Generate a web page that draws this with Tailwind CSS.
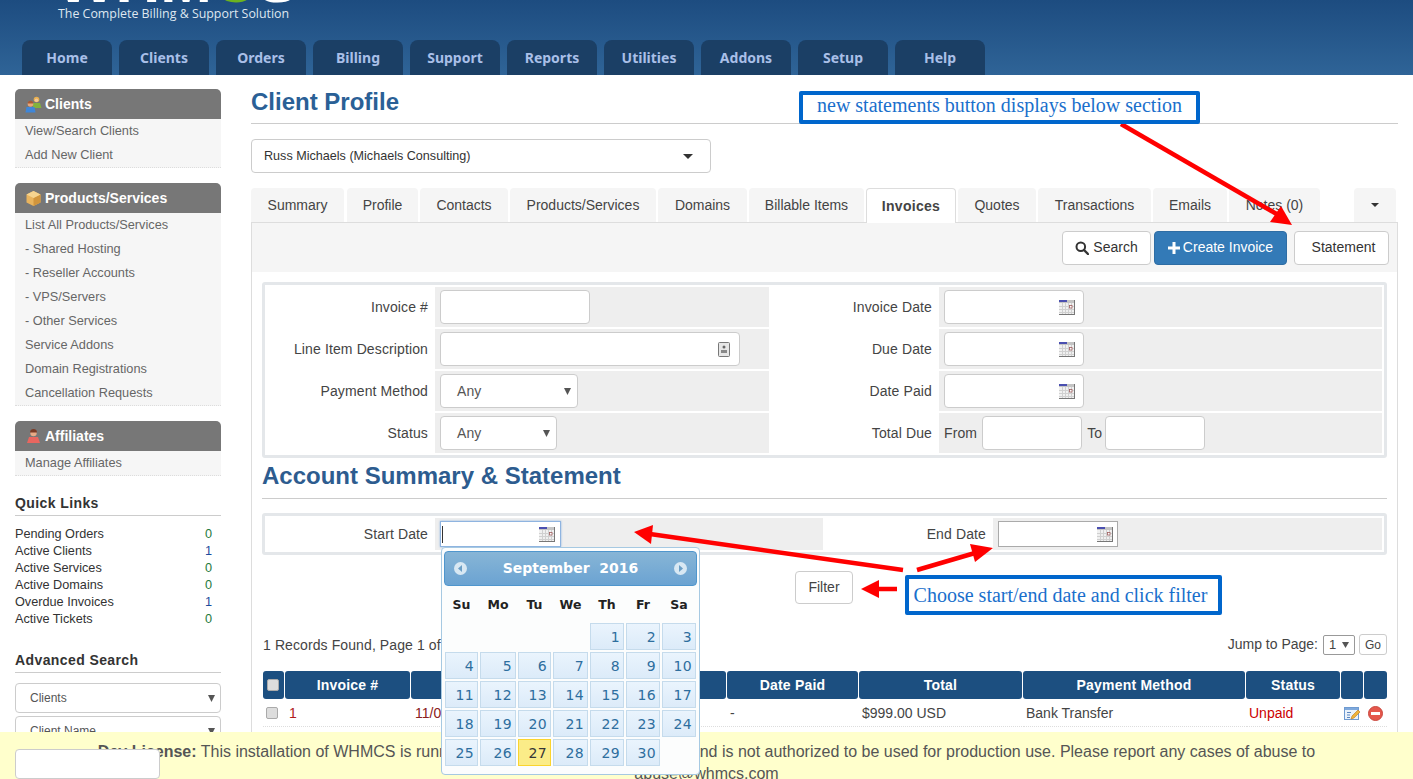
<!DOCTYPE html>
<html lang="en">
<head>
<meta charset="utf-8">
<title>WHMCS Client Profile</title>
<script src="https://cdn.jsdelivr.net/npm/@tailwindcss/browser@4"></script>
</head>
<body class="bg-white">
<div class="relative h-[779px] w-[1413px] overflow-hidden bg-white font-['Liberation_Sans',Arial,sans-serif] text-[14px] text-[#333]">

<!-- HEADER -->
<header class="relative h-[75px] overflow-hidden bg-gradient-to-b from-[#1d4c80] to-[#2f6497]">
  <div class="absolute left-[57px] top-[-49px] flex font-['Liberation_Sans',sans-serif] text-[62px] font-bold leading-[60px] text-white"><span>WHM</span><span class="text-[#6cb21f]">C</span><span>S</span></div>
  <div class="absolute left-[58px] top-[5px] font-['Open_Sans',sans-serif] text-[12.4px] leading-[18px] text-[#dfe7f0]">The Complete Billing &amp; Support Solution</div>
  <nav class="absolute bottom-0 left-[22px] flex gap-[7px] font-['Noto_Sans',sans-serif] text-[14px] font-bold text-[#a9bfe8]">
    <a class="flex h-[35px] w-[90px] items-center justify-center rounded-t-[8px] bg-[#1b3f65]">Home</a>
    <a class="flex h-[35px] w-[90px] items-center justify-center rounded-t-[8px] bg-[#1b3f65]">Clients</a>
    <a class="flex h-[35px] w-[90px] items-center justify-center rounded-t-[8px] bg-[#1b3f65]">Orders</a>
    <a class="flex h-[35px] w-[90px] items-center justify-center rounded-t-[8px] bg-[#1b3f65]">Billing</a>
    <a class="flex h-[35px] w-[90px] items-center justify-center rounded-t-[8px] bg-[#1b3f65]">Support</a>
    <a class="flex h-[35px] w-[90px] items-center justify-center rounded-t-[8px] bg-[#1b3f65]">Reports</a>
    <a class="flex h-[35px] w-[90px] items-center justify-center rounded-t-[8px] bg-[#1b3f65]">Utilities</a>
    <a class="flex h-[35px] w-[90px] items-center justify-center rounded-t-[8px] bg-[#1b3f65]">Addons</a>
    <a class="flex h-[35px] w-[90px] items-center justify-center rounded-t-[8px] bg-[#1b3f65]">Setup</a>
    <a class="flex h-[35px] w-[90px] items-center justify-center rounded-t-[8px] bg-[#1b3f65]">Help</a>
  </nav>
</header>

<div class="flex">
  <!-- SIDEBAR -->
  <aside class="ml-[15px] mt-[14px] w-[206px] shrink-0">
    <div class="flex h-[30px] items-center gap-[3px] rounded-t-[5px] bg-[#777] pl-[10px] text-[14px] font-bold text-white">
      <svg width="17" height="17" viewBox="0 0 17 17"><circle cx="11.500" cy="3.500" r="2.800" fill="#e9b04f"/><circle cx="11.500" cy="4.200" r="1.800" fill="#f2c79a"/><path d="M8 7h7l1.500 5H8z" fill="#83b23c"/><circle cx="5.500" cy="8" r="2.800" fill="#e7a77a"/><path d="M2.700 7.500a2.800 2.800 0 015.600 0z" fill="#a85a34"/><path d="M.5 16.500l1-5.500h8l1 5.500z" fill="#3f86d8"/></svg>
      <span>Clients</span>
    </div>
    <div class="flex flex-col border-b border-dotted border-[#ddd] bg-[#f6f6f6] pl-[10px] text-[12.75px] text-[#666]">
      <a class="flex h-[24px] items-center">View/Search Clients</a>
      <a class="flex h-[24px] items-center">Add New Client</a>
    </div>
    <div class="mt-[15px] flex h-[30px] items-center gap-[3px] rounded-t-[5px] bg-[#777] pl-[10px] text-[14px] font-bold text-white">
      <svg width="17" height="17" viewBox="0 0 17 17"><path d="M8.500 1l7 3.500v8l-7 3.500-7-3.500v-8z" fill="#e9b45e"/><path d="M8.500 8l7-3.500v8l-7 3.500z" fill="#d1953d"/><path d="M8.500 1l7 3.500-7 3.500-7-3.500z" fill="#f6d48f"/></svg>
      <span>Products/Services</span>
    </div>
    <div class="flex flex-col border-b border-dotted border-[#ddd] bg-[#f6f6f6] pl-[10px] text-[12.75px] text-[#666]">
      <a class="flex h-[24px] items-center">List All Products/Services</a>
      <a class="flex h-[24px] items-center">- Shared Hosting</a>
      <a class="flex h-[24px] items-center">- Reseller Accounts</a>
      <a class="flex h-[24px] items-center">- VPS/Servers</a>
      <a class="flex h-[24px] items-center">- Other Services</a>
      <a class="flex h-[24px] items-center">Service Addons</a>
      <a class="flex h-[24px] items-center">Domain Registrations</a>
      <a class="flex h-[24px] items-center">Cancellation Requests</a>
    </div>
    <div class="mt-[15px] flex h-[30px] items-center gap-[3px] rounded-t-[5px] bg-[#777] pl-[10px] text-[14px] font-bold text-white">
      <svg width="17" height="17" viewBox="0 0 17 17"><circle cx="8.500" cy="5" r="3.200" fill="#e9ab86"/><path d="M5 4.500a3.500 3.500 0 017 0H5z" fill="#7a3b26"/><path d="M2 15l2-6h9l2 6z" fill="#e8665f"/></svg>
      <span>Affiliates</span>
    </div>
    <div class="flex flex-col border-b border-dotted border-[#ddd] bg-[#f6f6f6] pl-[10px] text-[12.75px] text-[#666]">
      <a class="flex h-[24px] items-center">Manage Affiliates</a>
    </div>

    <h3 class="mt-[18px] h-[21px] text-[14px] font-bold leading-[18px] tracking-[0.4px] text-[#333]">Quick Links</h3>
    <div class="border-t border-[#ccc] pt-[10px] text-[12.7px] leading-[17px] text-[#333]">
      <div class="flex justify-between pr-[9px]"><span>Pending Orders</span><span class="text-[#1f7a3d]">0</span></div>
      <div class="flex justify-between pr-[9px]"><span>Active Clients</span><span class="text-[#1d4c9c]">1</span></div>
      <div class="flex justify-between pr-[9px]"><span>Active Services</span><span class="text-[#1f7a3d]">0</span></div>
      <div class="flex justify-between pr-[9px]"><span>Active Domains</span><span class="text-[#1f7a3d]">0</span></div>
      <div class="flex justify-between pr-[9px]"><span>Overdue Invoices</span><span class="text-[#1d4c9c]">1</span></div>
      <div class="flex justify-between pr-[9px]"><span>Active Tickets</span><span class="text-[#1f7a3d]">0</span></div>
    </div>

    <h3 class="mt-[23px] h-[21px] text-[14px] font-bold leading-[18px] tracking-[0.4px] text-[#333]">Advanced Search</h3>
    <div class="border-t border-[#ccc] pt-[10px]">
      <div class="flex h-[30px] items-center justify-between rounded-[4px] border border-[#ccc] bg-white pl-[14px] pr-[5px] text-[12px] text-[#555]">
        <span>Clients</span>
        <svg width="7" height="7" viewBox="0 0 7 7"><path d="M0 0h7L3.500 7z" fill="#555"/></svg>
      </div>
      <div class="mt-[3px] flex h-[30px] items-center justify-between rounded-[4px] border border-[#ccc] bg-white pl-[14px] pr-[5px] text-[12px] text-[#555]">
        <span>Client Name</span>
        <svg width="7" height="7" viewBox="0 0 7 7"><path d="M0 0h7L3.500 7z" fill="#555"/></svg>
      </div>
      <input class="relative z-20 mt-[3px] block h-[30px] w-[145px] rounded-[4px] border border-[#ccc] bg-white">
    </div>
  </aside>

  <!-- MAIN -->
  <main class="ml-[30px] w-[1147px] shrink-0">
    <h1 class="mt-[14px] h-[35px] border-b border-[#ccc] text-[24px] font-bold leading-[26px] text-[#2a6096]">Client Profile</h1>
    <div class="mt-[15px] flex h-[34px] w-[460px] items-center justify-between rounded-[4px] border border-[#ccc] pl-[12px] pr-[17px] text-[12.6px] text-[#333]">
      <span>Russ Michaels (Michaels Consulting)</span>
      <svg width="10" height="5" viewBox="0 0 10 5"><path d="M0 0h10L5 5z" fill="#333"/></svg>
    </div>

    <!-- tabs -->
    <div class="mt-[15px] flex h-[34px] text-[14px] text-[#444]">
      <a class="flex w-[93px] items-center justify-center rounded-t-[4px] bg-[#f5f5f5]">Summary</a>
      <a class="ml-[3px] flex w-[71px] items-center justify-center rounded-t-[4px] bg-[#f5f5f5]">Profile</a>
      <a class="ml-[2px] flex w-[88px] items-center justify-center rounded-t-[4px] bg-[#f5f5f5]">Contacts</a>
      <a class="ml-[2px] flex w-[146px] items-center justify-center rounded-t-[4px] bg-[#f5f5f5]">Products/Services</a>
      <a class="ml-[2px] flex w-[89px] items-center justify-center rounded-t-[4px] bg-[#f5f5f5]">Domains</a>
      <a class="ml-[2px] flex w-[115px] items-center justify-center rounded-t-[4px] bg-[#f5f5f5]">Billable Items</a>
      <a class="relative z-10 ml-[2px] flex h-[35px] w-[90px] items-center justify-center rounded-t-[4px] border border-b-0 border-[#ddd] bg-white font-bold tracking-[0.3px]">Invoices</a>
      <a class="ml-[2px] flex w-[78px] items-center justify-center rounded-t-[4px] bg-[#f5f5f5]">Quotes</a>
      <a class="ml-[2px] flex w-[113px] items-center justify-center rounded-t-[4px] bg-[#f5f5f5]">Transactions</a>
      <a class="ml-[2px] flex w-[74px] items-center justify-center rounded-t-[4px] bg-[#f5f5f5]">Emails</a>
      <a class="ml-[2px] flex w-[91px] items-center justify-center rounded-t-[4px] bg-[#f5f5f5]">Notes (0)</a>
      <a class="ml-[34px] flex w-[42px] items-center justify-center rounded-t-[4px] bg-[#f5f5f5]">
        <svg width="8" height="4" viewBox="0 0 8 4"><path d="M0 0h8L4 4z" fill="#333"/></svg>
      </a>
    </div>

    <!-- pane -->
    <section class="h-[600px] border-x border-t border-[#ddd]">
      <div class="flex h-[49px] items-center justify-end bg-[#f5f5f5] pr-[8px]">
        <button class="flex h-[34px] w-[89px] items-center justify-center gap-[4px] rounded-[4px] border border-[#ccc] bg-white text-[#333]">
          <svg width="14" height="14" viewBox="0 0 14 14"><circle cx="5.800" cy="5.800" r="4.300" fill="none" stroke="#333" stroke-width="2"/><path d="M9 9l4 4" stroke="#333" stroke-width="2.400" stroke-linecap="round"/></svg>
          <span>Search</span>
        </button>
        <button class="ml-[3px] flex h-[34px] w-[133px] items-center justify-center gap-[3px] rounded-[4px] border border-[#2e6da4] bg-[#337ab7] text-white">
          <svg width="12" height="12" viewBox="0 0 12 12"><path d="M4.500 0h3v4.500H12v3H7.500V12h-3V7.500H0v-3h4.500z" fill="#fff"/></svg>
          <span>Create Invoice</span>
        </button>
        <button class="ml-[7px] h-[34px] w-[95px] rounded-[4px] border border-[#ccc] bg-white pl-[4px] text-[#333]">Statement</button>
      </div>

      <div class="px-[10px]">
        <!-- filter box -->
        <div class="mt-[10px] grid w-[1125px] grid-cols-[168px_334px_170px_443px] gap-y-[2px] rounded-[3px] border-[3px] border-[#e4e7ea] p-[2px] text-[14px] tracking-[0.12px] text-[#444]">
          <div class="flex h-[40px] items-center justify-end pr-[7px]">Invoice #</div>
          <div class="flex h-[40px] items-center bg-[#eee] pl-[5px]"><input class="h-[34px] w-[150px] rounded-[4px] border border-[#ccc] bg-white"></div>
          <div class="flex h-[40px] items-center justify-end pr-[7px]">Invoice Date</div>
          <div class="flex h-[40px] items-center bg-[#eee] pl-[5px]">
            <div class="flex h-[34px] w-[140px] items-center justify-end rounded-[4px] border border-[#ccc] bg-white pr-[8px]">
              <svg width="16" height="15" viewBox="0 0 16 15"><rect width="16" height="15" fill="#777"/><rect x="0" y="0" width="15" height="14" fill="#f0f0f0"/><rect x="0" y="0" width="15" height="3" fill="#c4c4c4"/><rect x="0" y="0" width="8" height="2" fill="#4a4fb0"/><path d="M0 6.500h15M0 9.500h15M0 12.500h15M3.500 3v11M6.500 3v11M9.500 3v11M12.500 3v11" stroke="#d0d0d0" stroke-width="1"/><rect x="10.500" y="5.500" width="2.500" height="2.500" fill="#fff" stroke="#a06060" stroke-width=".8"/></svg>
            </div>
          </div>

          <div class="flex h-[40px] items-center justify-end pr-[7px]">Line Item Description</div>
          <div class="flex h-[40px] items-center bg-[#eee] pl-[5px]">
            <div class="flex h-[34px] w-[300px] items-center justify-end rounded-[4px] border border-[#ccc] bg-white pr-[9px]">
              <svg width="12" height="15" viewBox="0 0 12 15"><rect x=".5" y=".5" width="11" height="14" rx="1" fill="#e6e6e6" stroke="#777"/><circle cx="6" cy="5" r="1.500" fill="#666"/><path d="M3 11h6V8H3z" fill="#888"/></svg>
            </div>
          </div>
          <div class="flex h-[40px] items-center justify-end pr-[7px]">Due Date</div>
          <div class="flex h-[40px] items-center bg-[#eee] pl-[5px]">
            <div class="flex h-[34px] w-[140px] items-center justify-end rounded-[4px] border border-[#ccc] bg-white pr-[8px]">
              <svg width="16" height="15" viewBox="0 0 16 15"><rect width="16" height="15" fill="#777"/><rect x="0" y="0" width="15" height="14" fill="#f0f0f0"/><rect x="0" y="0" width="15" height="3" fill="#c4c4c4"/><rect x="0" y="0" width="8" height="2" fill="#4a4fb0"/><path d="M0 6.500h15M0 9.500h15M0 12.500h15M3.500 3v11M6.500 3v11M9.500 3v11M12.500 3v11" stroke="#d0d0d0" stroke-width="1"/><rect x="10.500" y="5.500" width="2.500" height="2.500" fill="#fff" stroke="#a06060" stroke-width=".8"/></svg>
            </div>
          </div>

          <div class="flex h-[40px] items-center justify-end pr-[7px]">Payment Method</div>
          <div class="flex h-[40px] items-center bg-[#eee] pl-[5px]">
            <div class="flex h-[34px] w-[138px] items-center justify-between rounded-[4px] border border-[#ccc] bg-white pl-[16px] pr-[6px] text-[#555]">
              <span>Any</span>
              <svg width="7" height="7" viewBox="0 0 7 7"><path d="M0 0h7L3.500 7z" fill="#555"/></svg>
            </div>
          </div>
          <div class="flex h-[40px] items-center justify-end pr-[7px]">Date Paid</div>
          <div class="flex h-[40px] items-center bg-[#eee] pl-[5px]">
            <div class="flex h-[34px] w-[140px] items-center justify-end rounded-[4px] border border-[#ccc] bg-white pr-[8px]">
              <svg width="16" height="15" viewBox="0 0 16 15"><rect width="16" height="15" fill="#777"/><rect x="0" y="0" width="15" height="14" fill="#f0f0f0"/><rect x="0" y="0" width="15" height="3" fill="#c4c4c4"/><rect x="0" y="0" width="8" height="2" fill="#4a4fb0"/><path d="M0 6.500h15M0 9.500h15M0 12.500h15M3.500 3v11M6.500 3v11M9.500 3v11M12.500 3v11" stroke="#d0d0d0" stroke-width="1"/><rect x="10.500" y="5.500" width="2.500" height="2.500" fill="#fff" stroke="#a06060" stroke-width=".8"/></svg>
            </div>
          </div>

          <div class="flex h-[40px] items-center justify-end pr-[7px]">Status</div>
          <div class="flex h-[40px] items-center bg-[#eee] pl-[5px]">
            <div class="flex h-[34px] w-[117px] items-center justify-between rounded-[4px] border border-[#ccc] bg-white pl-[16px] pr-[6px] text-[#555]">
              <span>Any</span>
              <svg width="7" height="7" viewBox="0 0 7 7"><path d="M0 0h7L3.500 7z" fill="#555"/></svg>
            </div>
          </div>
          <div class="flex h-[40px] items-center justify-end pr-[7px]">Total Due</div>
          <div class="flex h-[40px] items-center bg-[#eee] pl-[5px]">
            <span>From</span>
            <input class="ml-[5px] h-[34px] w-[100px] rounded-[4px] border border-[#ccc] bg-white">
            <span class="ml-[5px]">To</span>
            <input class="ml-[3px] h-[34px] w-[100px] rounded-[4px] border border-[#ccc] bg-white">
          </div>
        </div>

        <!-- Statement -->
        <h2 class="h-[41px] border-b border-[#ccc] pt-[5px] text-[24px] font-bold leading-[26px] text-[#2d5c8f]">Account Summary &amp; Statement</h2>

        <div class="mt-[14px] grid w-[1125px] grid-cols-[168px_388px_170px_389px] rounded-[3px] border-[3px] border-[#e4e7ea] p-[2px] text-[14px] tracking-[0.12px] text-[#444]">
          <div class="flex h-[32px] items-center justify-end pr-[7px]">Start Date</div>
          <div class="flex h-[32px] items-center bg-[#eee] pl-[5px]">
            <div class="flex h-[26px] w-[121px] items-center justify-between border border-[#8fb4e0] bg-white pl-[1px] pr-[5px] shadow-[0_0_2px_#8fb4e0]">
              <span class="h-[17px] w-px bg-[#333]"></span>
              <svg width="16" height="15" viewBox="0 0 16 15"><rect width="16" height="15" fill="#777"/><rect x="0" y="0" width="15" height="14" fill="#f0f0f0"/><rect x="0" y="0" width="15" height="3" fill="#c4c4c4"/><rect x="0" y="0" width="8" height="2" fill="#4a4fb0"/><path d="M0 6.500h15M0 9.500h15M0 12.500h15M3.500 3v11M6.500 3v11M9.500 3v11M12.500 3v11" stroke="#d0d0d0" stroke-width="1"/><rect x="10.500" y="5.500" width="2.500" height="2.500" fill="#fff" stroke="#a06060" stroke-width=".8"/></svg>
            </div>
          </div>
          <div class="flex h-[32px] items-center justify-end pr-[7px]">End Date</div>
          <div class="flex h-[32px] items-center bg-[#eee] pl-[5px]">
            <div class="flex h-[26px] w-[120px] items-center justify-end border border-[#aaa] bg-white pr-[4px]">
              <svg width="16" height="15" viewBox="0 0 16 15"><rect width="16" height="15" fill="#777"/><rect x="0" y="0" width="15" height="14" fill="#f0f0f0"/><rect x="0" y="0" width="15" height="3" fill="#c4c4c4"/><rect x="0" y="0" width="8" height="2" fill="#4a4fb0"/><path d="M0 6.500h15M0 9.500h15M0 12.500h15M3.500 3v11M6.500 3v11M9.500 3v11M12.500 3v11" stroke="#d0d0d0" stroke-width="1"/><rect x="10.500" y="5.500" width="2.500" height="2.500" fill="#fff" stroke="#a06060" stroke-width=".8"/></svg>
            </div>
          </div>
        </div>

        <div class="mt-[16px] flex justify-center pr-[1px]">
          <button class="h-[33px] w-[58px] rounded-[4px] border border-[#ccc] bg-white text-[#444]">Filter</button>
        </div>

        <div class="mt-[30px] flex h-[21px] items-center justify-between text-[14px] text-[#444]">
          <span class="pl-px pt-[1px] tracking-[0.1px]">1 Records Found, Page 1 of 1</span>
          <div class="flex items-center">
            <span>Jump to Page:</span>
            <div class="ml-[5px] flex h-[20px] w-[32px] items-center justify-between rounded-[2px] border border-[#999] bg-white px-[5px] text-[13px]">
              <span>1</span>
              <svg width="7" height="6" viewBox="0 0 7 6"><path d="M0 0h7L3.500 6z" fill="#555"/></svg>
            </div>
            <button class="ml-[4px] h-[21px] w-[28px] rounded-[3px] border border-[#ccc] bg-white text-[12px]">Go</button>
          </div>
        </div>

        <!-- table -->
        <div class="mt-[16px] w-[1124px] pl-px">
          <div class="grid h-[28px] grid-cols-[21px_125px_157px_157px_131px_163px_222px_94px_22px_23px] gap-x-px text-[14px] font-bold tracking-[0.2px] text-white">
            <div class="flex items-center rounded-[3px] bg-[#1c4f80] pl-[4px]"><span class="h-[12px] w-[12px] rounded-[2px] border border-[#aaa] bg-[#ddd]"></span></div>
            <div class="flex items-center justify-center rounded-[3px] bg-[#1c4f80]">Invoice #</div>
            <div class="flex items-center justify-center rounded-[3px] bg-[#1c4f80]">Invoice Date</div>
            <div class="flex items-center justify-center rounded-[3px] bg-[#1c4f80]">Due Date</div>
            <div class="flex items-center justify-center rounded-[3px] bg-[#1c4f80]">Date Paid</div>
            <div class="flex items-center justify-center rounded-[3px] bg-[#1c4f80]">Total</div>
            <div class="flex items-center justify-center rounded-[3px] bg-[#1c4f80]">Payment Method</div>
            <div class="flex items-center justify-center rounded-[3px] bg-[#1c4f80]">Status</div>
            <div class="rounded-[3px] bg-[#1c4f80]"></div>
            <div class="rounded-[3px] bg-[#1c4f80]"></div>
          </div>
          <div class="grid h-[28px] grid-cols-[21px_125px_157px_157px_131px_163px_222px_94px_22px_23px] gap-x-px text-[14px] text-[#444]">
            <div class="flex items-center border-b border-dotted border-[#ddd] pl-[3px] pt-[1px]"><span class="h-[12px] w-[12px] rounded-[2px] border border-[#aaa] bg-[#ddd]"></span></div>
            <div class="flex items-center border-b border-dotted border-[#ddd] pl-[4px] pt-[1px] text-[#b01c1c]">1</div>
            <div class="flex items-center border-b border-dotted border-[#ddd] pl-[4px] pt-[1px] text-[#8a2020]">11/09/2016</div>
            <div class="flex items-center border-b border-dotted border-[#ddd] pl-[4px] pt-[1px]">11/09/2016</div>
            <div class="flex items-center border-b border-dotted border-[#ddd] pl-[3px] pt-[1px]">-</div>
            <div class="flex items-center border-b border-dotted border-[#ddd] pl-[3px] pt-[1px]">$999.00 USD</div>
            <div class="flex items-center border-b border-dotted border-[#ddd] pl-[3px] pt-[1px]">Bank Transfer</div>
            <div class="flex items-center border-b border-dotted border-[#ddd] pl-[3px] pt-[1px] text-[#cc0000]">Unpaid</div>
            <div class="flex items-center justify-center border-b border-dotted border-[#ddd] pt-[1px]">
              <svg width="16" height="15" viewBox="0 0 16 15"><rect x=".5" y="1.500" width="14" height="12" fill="#eaf2fb" stroke="#6f9bd1"/><rect x="1" y="2" width="13" height="2" fill="#7fa9dc"/><path d="M3 6.500h4M3 9h3M3 11.500h3" stroke="#5b86bf"/><path d="M7 13l1-3 6-6 2 2-6 6z" fill="#f0b33a" stroke="#b97a1c" stroke-width=".6"/></svg>
            </div>
            <div class="flex items-center justify-center border-b border-dotted border-[#ddd] pt-[1px]">
              <svg width="15" height="15" viewBox="0 0 15 15"><circle cx="7.500" cy="7.500" r="7" fill="#e5574c" stroke="#c9483e"/><rect x="3" y="6" width="9" height="3" fill="#fff"/></svg>
            </div>
          </div>
        </div>
      </div>
    </section>
  </main>
</div>

<!-- LICENSE BANNER -->
<div class="absolute bottom-0 left-0 z-10 h-[47px] w-full bg-[#ffc] pt-[9px] text-center text-[16px] leading-[22px] text-[#555]">
  <div class="mx-auto w-[1290px]"><strong>Dev License:</strong> This installation of WHMCS is running under a Development License and is not authorized to be used for production use. Please report any cases of abuse to abuse@whmcs.com</div>
</div>

<!-- DATEPICKER -->
<div class="absolute left-[441px] top-[547px] z-30 h-[228px] w-[259px] rounded-[4px] border border-[#a6c9e2] bg-[#fcfdfd] px-[2px] pt-[3px] font-['DejaVu_Sans',sans-serif]">
  <div class="flex h-[35px] items-center justify-between rounded-[4px] border border-[#4f96cd] bg-gradient-to-b from-[#87b5d6] to-[#6ba3d2] px-[8px] text-[14px] font-bold text-white">
    <svg width="15" height="15" viewBox="0 0 15 15"><circle cx="7.500" cy="7.500" r="6.500" fill="#d8e8f3"/><path d="M9 4v7L5 7.500z" fill="#6b9fc6"/></svg>
    <span class="whitespace-pre">September  2016</span>
    <svg width="15" height="15" viewBox="0 0 15 15"><circle cx="7.500" cy="7.500" r="6.500" fill="#d8e8f3"/><path d="M6 4v7l4-3.500z" fill="#6b9fc6"/></svg>
  </div>
  <div class="ml-px mt-[9px] grid h-[28px] grid-cols-[33px_36px_33px_35px_34px_34px_34px] gap-x-[2px] text-center text-[12.5px] font-bold leading-[20px] text-[#222]">
    <span>Su</span><span>Mo</span><span>Tu</span><span>We</span><span>Th</span><span>Fr</span><span>Sa</span>
  </div>
  <div class="ml-px grid grid-cols-[33px_36px_33px_35px_34px_34px_34px] gap-[2px] text-right text-[14px] leading-[27px] tracking-[0.4px] text-[#2e6e9e]">
    <span></span><span></span><span></span><span></span>
    <a class="h-[27px] border border-[#c5dbec] bg-gradient-to-b from-[#eaf4fd] to-[#dcebf9] pr-[3px]">1</a>
    <a class="h-[27px] border border-[#c5dbec] bg-gradient-to-b from-[#eaf4fd] to-[#dcebf9] pr-[3px]">2</a>
    <a class="h-[27px] border border-[#c5dbec] bg-gradient-to-b from-[#eaf4fd] to-[#dcebf9] pr-[3px]">3</a>
    <a class="h-[27px] border border-[#c5dbec] bg-gradient-to-b from-[#eaf4fd] to-[#dcebf9] pr-[3px]">4</a>
    <a class="h-[27px] border border-[#c5dbec] bg-gradient-to-b from-[#eaf4fd] to-[#dcebf9] pr-[3px]">5</a>
    <a class="h-[27px] border border-[#c5dbec] bg-gradient-to-b from-[#eaf4fd] to-[#dcebf9] pr-[3px]">6</a>
    <a class="h-[27px] border border-[#c5dbec] bg-gradient-to-b from-[#eaf4fd] to-[#dcebf9] pr-[3px]">7</a>
    <a class="h-[27px] border border-[#c5dbec] bg-gradient-to-b from-[#eaf4fd] to-[#dcebf9] pr-[3px]">8</a>
    <a class="h-[27px] border border-[#c5dbec] bg-gradient-to-b from-[#eaf4fd] to-[#dcebf9] pr-[3px]">9</a>
    <a class="h-[27px] border border-[#c5dbec] bg-gradient-to-b from-[#eaf4fd] to-[#dcebf9] pr-[3px]">10</a>
    <a class="h-[27px] border border-[#c5dbec] bg-gradient-to-b from-[#eaf4fd] to-[#dcebf9] pr-[3px]">11</a>
    <a class="h-[27px] border border-[#c5dbec] bg-gradient-to-b from-[#eaf4fd] to-[#dcebf9] pr-[3px]">12</a>
    <a class="h-[27px] border border-[#c5dbec] bg-gradient-to-b from-[#eaf4fd] to-[#dcebf9] pr-[3px]">13</a>
    <a class="h-[27px] border border-[#c5dbec] bg-gradient-to-b from-[#eaf4fd] to-[#dcebf9] pr-[3px]">14</a>
    <a class="h-[27px] border border-[#c5dbec] bg-gradient-to-b from-[#eaf4fd] to-[#dcebf9] pr-[3px]">15</a>
    <a class="h-[27px] border border-[#c5dbec] bg-gradient-to-b from-[#eaf4fd] to-[#dcebf9] pr-[3px]">16</a>
    <a class="h-[27px] border border-[#c5dbec] bg-gradient-to-b from-[#eaf4fd] to-[#dcebf9] pr-[3px]">17</a>
    <a class="h-[27px] border border-[#c5dbec] bg-gradient-to-b from-[#eaf4fd] to-[#dcebf9] pr-[3px]">18</a>
    <a class="h-[27px] border border-[#c5dbec] bg-gradient-to-b from-[#eaf4fd] to-[#dcebf9] pr-[3px]">19</a>
    <a class="h-[27px] border border-[#c5dbec] bg-gradient-to-b from-[#eaf4fd] to-[#dcebf9] pr-[3px]">20</a>
    <a class="h-[27px] border border-[#c5dbec] bg-gradient-to-b from-[#eaf4fd] to-[#dcebf9] pr-[3px]">21</a>
    <a class="h-[27px] border border-[#c5dbec] bg-gradient-to-b from-[#eaf4fd] to-[#dcebf9] pr-[3px]">22</a>
    <a class="h-[27px] border border-[#c5dbec] bg-gradient-to-b from-[#eaf4fd] to-[#dcebf9] pr-[3px]">23</a>
    <a class="h-[27px] border border-[#c5dbec] bg-gradient-to-b from-[#eaf4fd] to-[#dcebf9] pr-[3px]">24</a>
    <a class="h-[27px] border border-[#c5dbec] bg-gradient-to-b from-[#eaf4fd] to-[#dcebf9] pr-[3px]">25</a>
    <a class="h-[27px] border border-[#c5dbec] bg-gradient-to-b from-[#eaf4fd] to-[#dcebf9] pr-[3px]">26</a>
    <a class="h-[27px] border border-[#fad42e] bg-[#fbec88] pr-[3px] text-[#363636]">27</a>
    <a class="h-[27px] border border-[#c5dbec] bg-gradient-to-b from-[#eaf4fd] to-[#dcebf9] pr-[3px]">28</a>
    <a class="h-[27px] border border-[#c5dbec] bg-gradient-to-b from-[#eaf4fd] to-[#dcebf9] pr-[3px]">29</a>
    <a class="h-[27px] border border-[#c5dbec] bg-gradient-to-b from-[#eaf4fd] to-[#dcebf9] pr-[3px]">30</a>
  </div>
</div>

<!-- ANNOTATIONS -->
<svg class="absolute left-0 top-0 z-40" width="1413" height="779" viewBox="0 0 1413 779">
  <g stroke="#ff0000" stroke-width="4.500" fill="#ff0000">
    <path d="M1121 124L1280 216" fill="none"/>
    <path d="M1292 225L1270 222L1281 206z" stroke="none"/>
    <path d="M903 570L650 534" fill="none"/>
    <path d="M634 532L653 525L651 544z" stroke="none"/>
    <path d="M917 570L975 553" fill="none"/>
    <path d="M993 548L970 544L975 562z" stroke="none"/>
    <path d="M897 589L878 589" fill="none"/>
    <path d="M861 589L879 580L879 598z" stroke="none"/>
  </g>
</svg>
<div class="absolute left-[799px] top-[91px] z-40 flex h-[33px] w-[401px] items-center justify-center rounded-[2px] border-[4px] border-[#0066cc] bg-white pb-[5px] font-['Liberation_Serif',serif] text-[20px] text-[#1a6fcc]">new statements button displays below section</div>
<div class="absolute left-[905px] top-[575px] z-40 flex h-[40px] w-[317px] items-center justify-center rounded-[2px] border-[4px] border-[#0066cc] bg-white pb-[1px] pr-[6px] font-['Liberation_Serif',serif] text-[20px] text-[#1a6fcc]">Choose start/end date and click filter</div>

</div>
</body>
</html>
